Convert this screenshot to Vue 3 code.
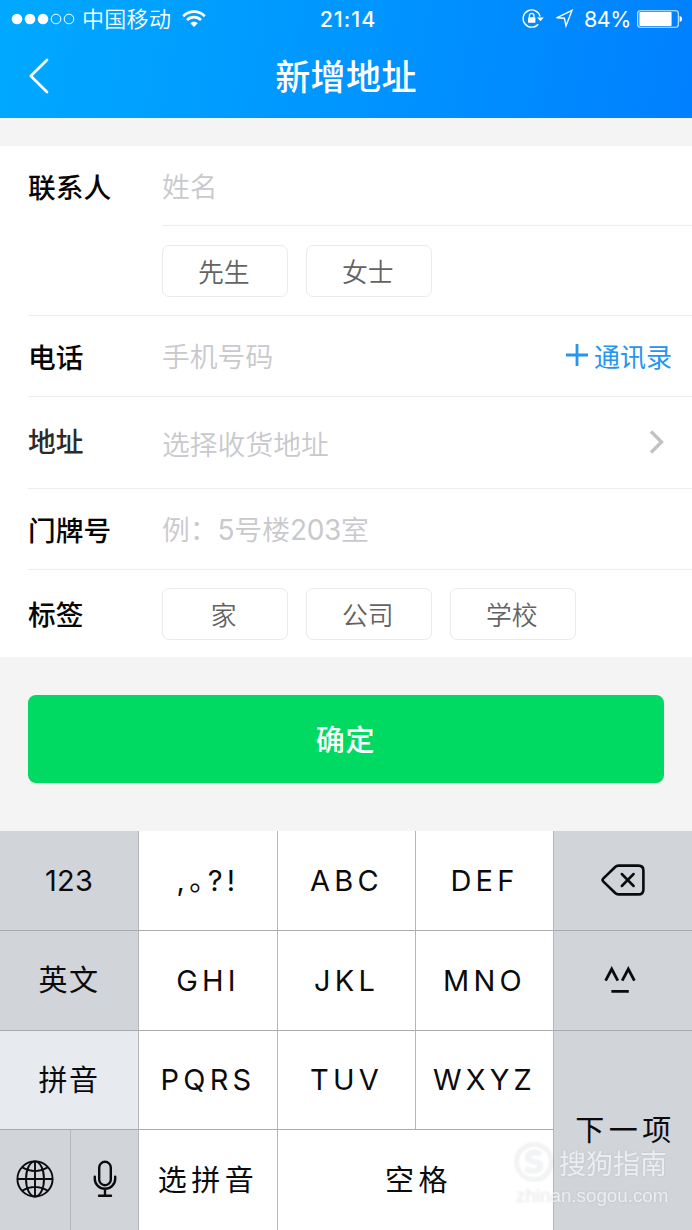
<script setup>
const letterRows = [
  [',。?!', 'ABC', 'DEF'],
  ['GHI', 'JKL', 'MNO'],
  ['PQRS', 'TUV', 'WXYZ'],
]
const titles = ['先生', '女士']
const tags = ['家', '公司', '学校']
</script>

<template>
  <div class="screen">
    <header class="top">
      <div class="status">
        <div class="carrier">
          <svg width="64" height="20" viewBox="0 0 64 20">
            <g fill="#fff"><circle cx="6" cy="10" r="5.3" /><circle cx="19" cy="10" r="5.3" /><circle cx="32" cy="10" r="5.3" /></g>
            <g fill="none" stroke="#fff" stroke-width="1"><circle cx="45" cy="10" r="4.8" /><circle cx="58" cy="10" r="4.8" /></g>
          </svg>
          <span class="operator">中国移动</span>
          <svg class="wifi" width="24" height="18" viewBox="0 0 24 18">
            <g fill="none" stroke="#fff" stroke-width="2.7">
              <path d="M1.2 6.2C7.4 .2 16.6 .2 22.8 6.2" />
              <path d="M5 10.1C9 6.2 15 6.2 19 10.1" />
            </g>
            <path d="M8.3 13.2C10.4 11.2 13.6 11.2 15.7 13.2L12 17Z" fill="#fff" />
          </svg>
        </div>
        <span class="clock">21:14</span>
        <div class="indicators">
          <svg width="22" height="20" viewBox="0 0 22 20">
            <path d="M16.2 15.2A8.6 8.6 0 1 1 18.1 7.6" fill="none" stroke="#fff" stroke-width="1.4" />
            <path d="M15 8.6H21.8L18.4 12.2Z" fill="#fff" />
            <rect x="6" y="8.2" width="7.4" height="5.6" rx=".6" fill="#fff" />
            <path d="M7.4 8.6V6.7a2.3 2.3 0 0 1 4.6 0V8.6" fill="none" stroke="#fff" stroke-width="1.3" />
          </svg>
          <svg class="locate" width="20" height="20" viewBox="0 0 20 20">
            <path d="M2.6 8.8L18 1.4L12 16.8L10.4 9.2Z" fill="none" stroke="#fff" stroke-width="1.4" stroke-linejoin="miter" />
          </svg>
          <span class="percent">84%</span>
          <svg width="46" height="20" viewBox="0 0 46 20">
            <rect x=".7" y="1.7" width="40.6" height="16.6" rx="2.5" fill="none" stroke="#fff" stroke-opacity=".85" stroke-width="1.1" />
            <rect x="2.4" y="3.1" width="32.2" height="13.8" rx="1" fill="#fff" />
            <path d="M42.6 7Q45.2 7.6 45.2 10T42.6 13Z" fill="#fff" />
          </svg>
        </div>
      </div>
      <div class="nav">
        <svg class="back" width="22" height="36" viewBox="0 0 22 36">
          <path d="M19 2L2.8 18L19 34" fill="none" stroke="#fff" stroke-width="2.7" stroke-linecap="round" stroke-linejoin="round" />
        </svg>
        <h1>新增地址</h1>
      </div>
    </header>

    <main class="form">
      <div class="row name">
        <label>联系人</label>
        <div class="field underlined"><span class="hint">姓名</span></div>
      </div>
      <div class="row honorific">
        <div class="chips"><button v-for="t in titles" :key="t" class="chip">{{ t }}</button></div>
      </div>
      <div class="row phone">
        <label>电话</label>
        <div class="field"><span class="hint">手机号码</span></div>
        <a class="contacts">
          <svg width="22" height="22" viewBox="0 0 22 22"><path d="M11 0V22M0 11H22" stroke="#2595f0" stroke-width="2.8" /></svg>
          <span>通讯录</span>
        </a>
      </div>
      <div class="row address">
        <label>地址</label>
        <div class="field"><span class="hint">选择收货地址</span></div>
        <svg class="more" width="16" height="24" viewBox="0 0 16 24"><path d="M2 1.5L12.5 12L2 22.5" fill="none" stroke="#c2c2c4" stroke-width="3.4" /></svg>
      </div>
      <div class="row door">
        <label>门牌号</label>
        <div class="field"><span class="hint">例：<i>5</i>号楼<i>203</i>室</span></div>
      </div>
      <div class="row tags">
        <label>标签</label>
        <div class="chips"><button v-for="t in tags" :key="t" class="chip">{{ t }}</button></div>
      </div>
    </main>

    <div class="action"><button class="confirm">确定</button></div>

    <section class="keyboard">
      <div class="side left">
        <div class="key num">123</div>
        <div class="key zh">英文</div>
        <div class="key zh active">拼音</div>
        <div class="split">
          <div class="key globe">
            <svg width="38" height="38" viewBox="0 0 38 38" fill="none" stroke="#0b0b0d" stroke-width="1.9">
              <circle cx="19" cy="19" r="17.6" /><ellipse cx="19" cy="19" rx="9" ry="17.6" />
              <path d="M19 1.4V36.6M1.4 19H36.6M6 7.3Q19 15 32 7.3M6 30.7Q19 23 32 30.7" />
            </svg>
          </div>
          <div class="key mic">
            <svg width="24" height="38" viewBox="0 0 24 38" fill="none" stroke="#0b0b0d" stroke-width="2.4" stroke-linecap="round">
              <rect x="6.2" y="1.8" width="11.6" height="23.4" rx="5.8" />
              <path d="M1.8 16.6V19a10.2 9.8 0 0 0 20.4 0V16.6M12 29V35.6M6 35.8H18" />
            </svg>
          </div>
        </div>
      </div>
      <div class="letters">
        <template v-for="(row, r) in letterRows" :key="r">
          <div v-for="k in row" :key="k" class="key" :class="{ punct: k.includes('。') }">{{ k }}</div>
        </template>
        <div class="key wide-text">选拼音</div>
        <div class="key space">空格</div>
      </div>
      <div class="side right">
        <div class="key">
          <svg width="44" height="32" viewBox="0 0 44 32" fill="none" stroke="#0b0b0d" stroke-width="2.6" stroke-linecap="round" stroke-linejoin="round">
            <path d="M17.5 1.6H37.4Q42.4 1.6 42.4 6.6V25.4Q42.4 30.4 37.4 30.4H17.5Q15.6 30.4 14.2 29L2.4 17.6Q.8 16 2.4 14.4L14.2 3Q15.6 1.6 17.5 1.6Z" />
            <path d="M20.8 10L32.6 22M32.6 10L20.8 22" stroke-width="2.5" />
          </svg>
        </div>
        <div class="key face">
          <svg width="32" height="28" viewBox="0 0 32 28" fill="none" stroke="#0b0b0d" stroke-width="2.8">
            <path d="M1.6 14.6L7.7 3L13.8 14.6M18.2 14.6L24.3 3L30.4 14.6M7.4 25.4H24.8" />
          </svg>
        </div>
        <div class="key next">下一项</div>
      </div>
      <div class="watermark">
        <svg width="40" height="40" viewBox="0 0 40 40" fill="none" stroke="currentColor">
          <circle cx="20" cy="20" r="17.5" stroke-width="3" />
          <path d="M27 12Q22 9.5 16.5 11.5C11 14 13 18.5 20 19.5S29 25 23.5 28Q18 30.5 12 27" stroke-width="4" />
        </svg>
        <span class="brand">搜狗指南</span>
        <div class="site">zhinan.sogou.com</div>
      </div>
    </section>
  </div>
</template>

<style>
body { margin: 0; background: #f4f4f4; }
</style>

<style scoped>
* { box-sizing: border-box; }
svg { display: block; flex: none; }
.screen {
  width: 692px; height: 1230px; overflow: hidden; background: #f4f4f4;
  font-family: "Noto Sans CJK SC", "Liberation Sans", sans-serif;
  display: flex; flex-direction: column;
}
.top { height: 118px; flex: none; color: #fff; background: linear-gradient(100deg, #00a9ff 0%, #0096ff 50%, #0080ff 100%); }
.status { height: 38px; display: grid; grid-template-columns: 1fr auto 1fr; align-items: center; padding: 0 9px 0 11px; }
.carrier, .indicators { display: flex; align-items: center; }
.indicators { justify-content: flex-end; }
.operator { font-size: 22px; line-height: 34px; letter-spacing: .3px; margin-left: 7px; padding-bottom: 4px; font-weight: 350; }
.wifi { margin-left: 11px; }
.clock { font: 500 21.5px/38px Inter, sans-serif; letter-spacing: 1px; padding-left: 2px; }
.percent { font: 400 21.5px/38px Inter, sans-serif; letter-spacing: -.4px; margin: 0 6px 0 10px; }
.locate { margin-left: 10px; }
.nav { height: 80px; position: relative; display: flex; justify-content: center; align-items: center; }
.back { position: absolute; left: 28px; top: 20px; }
h1 { margin: 0; font-size: 35px; line-height: 76px; font-weight: 500; letter-spacing: .4px; padding-bottom: 6px; }

.form { margin-top: 28px; height: 511px; flex: none; background: #fff; padding-left: 28px; }
.row { display: flex; align-items: center; border-bottom: 1px solid #ececec; }
label { width: 134px; flex: none; font-size: 27.7px; font-weight: 500; color: #060606; line-height: 40px; }
.field { flex: 1; font-size: 27.8px; line-height: 40px; color: #c9c9cd; font-weight: 350; padding-bottom: 3px; }
.hint i { font: normal 400 28px Inter, sans-serif; letter-spacing: -.3px; }
.name { height: 80px; border: 0; }
.name label { padding-bottom: 1px; }
.underlined { height: 80px; border-bottom: 1px solid #ececec; padding-top: 18.5px; }
.honorific { height: 90px; padding-left: 133.5px; }
.phone { height: 81px; }
.address { height: 92px; }
.address label { color: #2b2b2b; padding-bottom: 5px; }
.address .field { padding-bottom: 0; }
.more { margin: 0 27px 2px 0; }
.door { height: 81px; }
.tags { height: 87px; border: 0; }
.tags label { width: 133.5px; padding-bottom: 1px; }
.chips { display: flex; gap: 18px; }
.chip {
  width: 126px; height: 52px; padding: 0 1.5px 0 0; border: 1px solid #ebebeb; border-radius: 7px; background: #fff;
  color: #636363; font: 350 25.8px/47px "Noto Sans CJK SC", sans-serif;
}
.contacts { display: flex; align-items: center; gap: 6px; margin: 0 20px 2px 0; color: #2595f0; font-size: 26px; line-height: 40px; }
.contacts span { padding-top: 2px; }

.action { padding: 38px 28px 48px; flex: none; }
.confirm {
  display: block; width: 636px; height: 88px; border: 0; border-radius: 8px; background: #00da62; color: #fff;
  font: 500 29px/86px "Noto Sans CJK SC", sans-serif; letter-spacing: .8px; padding: 0 1px 2px 0;
}

.keyboard { position: relative; flex: 1; display: grid; grid-template-columns: 139px 415px 138px; color: #0b0b0d; background: #fff; }
.key {
  display: flex; align-items: center; justify-content: center; padding-bottom: 1px;
  border-right: 1px solid #b4b6ba; border-bottom: 1px solid #a9abb0;
  font: 400 29px/1 Inter, "Noto Sans CJK SC", sans-serif; letter-spacing: 4.2px;
}
.side, .letters { display: grid; grid-template-rows: 100px 100px 99px 100px; }
.side { background: #d1d4d9; }
.letters { grid-template-columns: 139px 138px 138px; }
.num { letter-spacing: .2px; }
.zh { font-size: 29px; letter-spacing: 1.5px; padding-bottom: 0; }
/* half-width forms for the full-width ideographic stop */
.punct { font-feature-settings: "halt" 1; }
.active { background: #e7ebf0; }
.split { display: grid; grid-template-columns: 71px 68px; }
.split .key, .wide-text, .space { border-bottom: 0; }
.split .key { padding-bottom: 3px; }
.wide-text, .space, .next { font-size: 29px; letter-spacing: 4.5px; padding-bottom: 0; }
.space { grid-column: span 2; padding-left: 6px; }
.right .key { border-right: 0; }
.right .face { padding: 0 7px 2px 0; }
.next { grid-row: span 2; border-bottom: 0; padding-left: 5px; }
.watermark {
  position: absolute; left: 514px; top: 311px; color: rgba(245, 246, 248, .8);
  display: grid; grid-template-columns: 40px auto; column-gap: 5px;
  filter: drop-shadow(0 0 1px rgba(120, 120, 125, .25)); pointer-events: none;
}
.brand { font-size: 27px; line-height: 28px; padding-top: 7px; }
.site { grid-column: span 2; font: 400 18.8px/24px "Liberation Sans", sans-serif; margin: 2px 0 0 2px; }
</style>
